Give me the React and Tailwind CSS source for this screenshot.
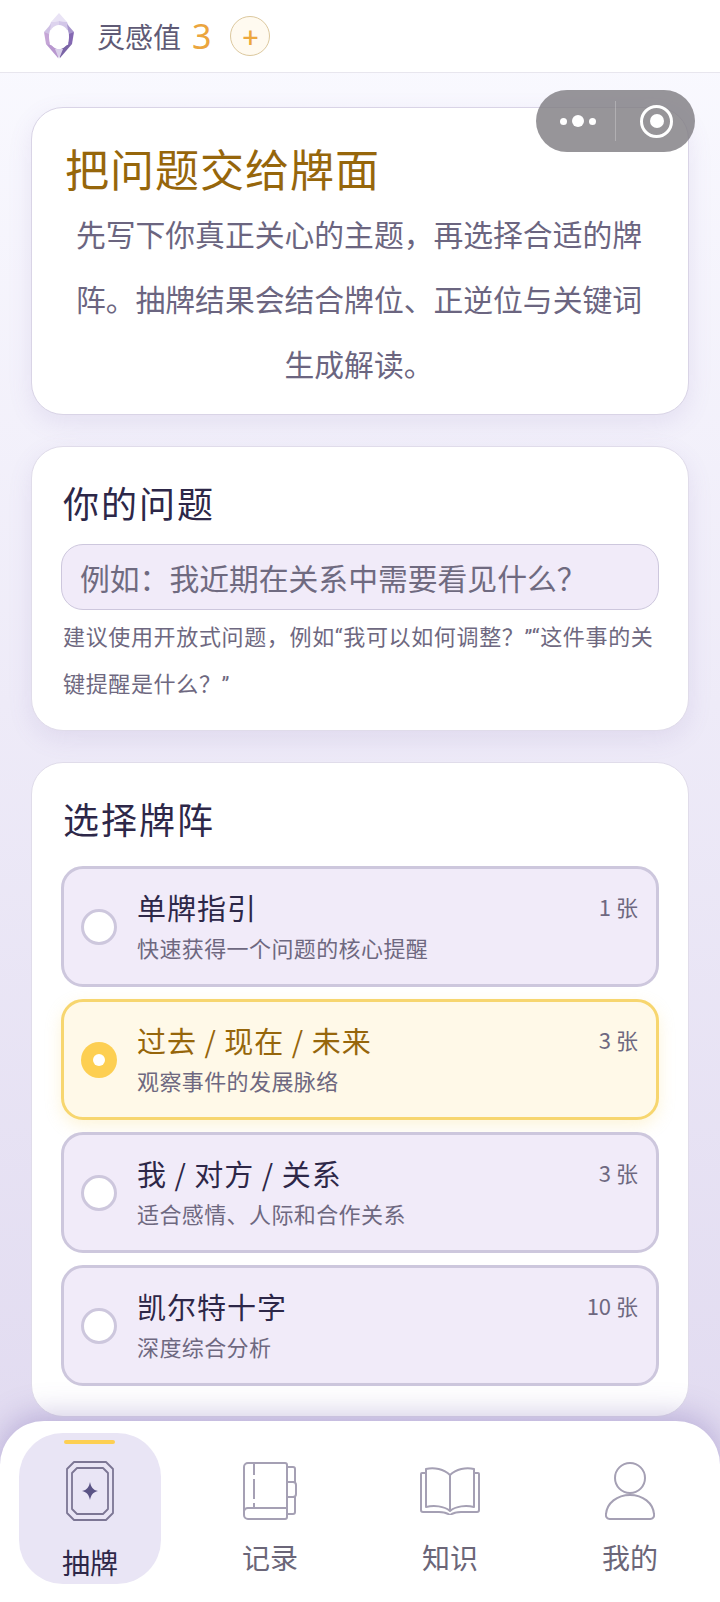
import React from "react";

const FONT = { fontFamily: '"Noto Sans CJK SC", "Noto Sans", sans-serif' };

const spreads = [
  { name: "单牌指引", desc: "快速获得一个问题的核心提醒", count: "1 张" },
  { name: "过去 / 现在 / 未来", desc: "观察事件的发展脉络", count: "3 张", active: true },
  { name: "我 / 对方 / 关系", desc: "适合感情、人际和合作关系", count: "3 张" },
  { name: "凯尔特十字", desc: "深度综合分析", count: "10 张" },
];

const CrystalLogo = () => (
  <svg width="32" height="48" viewBox="0 0 32 48">
    <polygon points="16,1 24,10 16,9 8,10" fill="#e9e3f5" />
    <polygon points="8,10 16,9 16,14 4,20" fill="#ddd3ee" />
    <polygon points="24,10 16,9 16,14 28,20" fill="#d2c6e8" />
    <polygon points="1,20 8,12 6,24" fill="#cfc0e4" />
    <polygon points="31,20 24,12 26,24" fill="#a795cc" />
    <polygon points="1,20 6,22 7,34 3,32" fill="#c5a5d6" />
    <polygon points="31,20 26,22 25,34 29,32" fill="#8468b2" />
    <polygon points="3,32 8,33 16,38 15,46" fill="#b897cf" />
    <polygon points="29,32 24,33 16,38 17,46" fill="#7a64a6" />
    <polygon points="12,37 20,37 16,47" fill="#d9cfe9" />
    <ellipse cx="16" cy="25" rx="10" ry="12" fill="#ffffff" />
  </svg>
);

const CardIcon = () => (
  <svg width="48" height="60" viewBox="0 0 48 60" fill="none" stroke="#7c7694" strokeWidth="1.8">
    <path d="M8 1h32l7 7v44l-7 7H8l-7-7V8z" strokeLinejoin="round" />
    <path d="M11 7h26l5 5v36l-5 5H11l-5-5V12z" strokeLinejoin="round" />
    <path d="M24 21c1 5 3 8 8 9-5 1-7 4-8 9-1-5-3-8-8-9 5-1 7-4 8-9z" fill="#5a5385" stroke="none" />
  </svg>
);

const NotebookIcon = () => (
  <svg width="54" height="58" viewBox="0 0 54 58" fill="none" stroke="#a5a0b4" strokeWidth="2">
    <path d="M5 1h37a2 2 0 0 1 2 2v52a2 2 0 0 1-2 2H5a4 4 0 0 1-4-4V5a4 4 0 0 1 4-4z" />
    <path d="M1 49a4 4 0 0 1 4-3h39" />
    <path d="M11 1v12M11 17v20M11 41v5" />
    <path d="M44 5h6a2 2 0 0 1 2 2v13h-8M44 20h6a3 3 0 0 1 3 3v9a3 3 0 0 1-3 3h-6M44 35h8v15a2 2 0 0 1-2 2h-6" />
  </svg>
);

const BookIcon = () => (
  <svg width="60" height="48" viewBox="0 0 60 48" fill="none" stroke="#a5a0b4" strokeWidth="2" strokeLinejoin="round">
    <path d="M30 8C24 2 14 0 6 2v38c8-2 18-1 24 4 6-5 16-6 24-4V2c-8-2-18 0-24 6z" />
    <path d="M30 8v36" />
    <path d="M6 6H2a1 1 0 0 0-1 1v36a2 2 0 0 0 2 2h16c4 0 8 1 11 3 3-2 7-3 11-3h16a2 2 0 0 0 2-2V7a1 1 0 0 0-1-1h-4" />
  </svg>
);

const PersonIcon = () => (
  <svg width="50" height="58" viewBox="0 0 50 58" fill="none" stroke="#a5a0b4" strokeWidth="2">
    <circle cx="25" cy="16" r="15" />
    <path d="M25 33c-13 0-23 8-24 19a4 4 0 0 0 4 5h40a4 4 0 0 0 4-5c-1-11-11-19-24-19z" />
  </svg>
);

const tabs = [
  { label: "抽牌", icon: <CardIcon />, active: true },
  { label: "记录", icon: <NotebookIcon /> },
  { label: "知识", icon: <BookIcon /> },
  { label: "我的", icon: <PersonIcon /> },
];

const SpreadRow = ({ item }) => (
  <div
    className={`flex h-[121px] items-center rounded-[22px] border-[3px] pl-[17px] pr-[18px] ${
      item.active
        ? "border-[#f7d66f] bg-[#fff9e8] shadow-[0_6px_16px_rgba(247,214,111,0.25)]"
        : "border-[#cdc7dd] bg-[#f1ebf9]"
    }`}
  >
    <div
      className={`flex h-[36px] w-[36px] shrink-0 items-center justify-center rounded-full ${
        item.active ? "bg-[#fdcf52]" : "border-[3px] border-[#cdc7dd] bg-white"
      }`}
    >
      {item.active && <div className="h-[12px] w-[12px] rounded-full bg-white" />}
    </div>
    <div className="ml-[20px] flex-1 pb-[2px]">
      <div className="flex items-start justify-between">
        <div
          className={`text-[29px] leading-[43px] tracking-[1px] ${
            item.active ? "text-[#96660b]" : "text-[#2d2748]"
          }`}
        >
          {item.name}
        </div>
        <div className="pt-[2px] text-[22px] leading-[36px] text-[#6e6880]">{item.count}</div>
      </div>
      <div className="text-[22px] leading-[36px] tracking-[0.4px] text-[#6e6880]">{item.desc}</div>
    </div>
  </div>
);

export default function App() {
  return (
    <div
      className="relative flex h-[1602px] w-[720px] flex-col overflow-hidden bg-gradient-to-b from-[#fafaff] to-[#dfd8ef]"
      style={FONT}
    >
      {/* header */}
      <div className="flex h-[73px] shrink-0 items-center border-b border-[#e8e6ee] bg-white pl-[43px]">
        <CrystalLogo />
        <span className="ml-[22px] text-[28px] text-[#5f5a75]">灵感值</span>
        <span className="ml-[11px] font-['Noto_Sans'] text-[34px] text-[#eba53e]">3</span>
        <div className="ml-[19px] flex h-[40px] w-[40px] items-center justify-center rounded-full border border-[#dcc89e] bg-[#fffaf0] text-[28px] font-medium leading-none text-[#eda73c]">
          +
        </div>
      </div>

      {/* wechat capsule */}
      <div className="absolute left-[536px] top-[90px] z-20 flex h-[62px] w-[159px] items-center rounded-full bg-[#7d7b80]/80">
        <div className="flex w-[79px] items-center justify-center gap-[5px] pl-[5px]">
          <span className="h-[7px] w-[7px] rounded-full bg-white" />
          <span className="h-[12px] w-[12px] rounded-full bg-white" />
          <span className="h-[7px] w-[7px] rounded-full bg-white" />
        </div>
        <div className="h-[40px] w-px bg-white/25" />
        <div className="ml-[24px] flex h-[33px] w-[33px] items-center justify-center rounded-full border-[3px] border-white">
          <span className="h-[14px] w-[14px] rounded-full bg-white" />
        </div>
      </div>

      {/* content */}
      <div className="flex flex-1 flex-col gap-[31px] px-[31px] pt-[34px]">
        <div className="h-[308px] rounded-[32px] border border-[#d9d4e6] bg-white pl-[33px] pr-[35px] pt-[30px] shadow-[0_8px_24px_rgba(120,100,170,0.12)]">
          <h1 className="text-[44px] font-normal leading-[60px] tracking-[1px] text-[#96660b]">把问题交给牌面</h1>
          <p className="mt-[3px] text-center text-[29.8px] leading-[65px] text-[#6b6580]">
            先写下你真正关心的主题，再选择合适的牌阵。抽牌结果会结合牌位、正逆位与关键词生成解读。
          </p>
        </div>

        <div className="h-[285px] rounded-[32px] border border-[#e0dcea] bg-white px-[29px] pt-[28px] shadow-[0_8px_24px_rgba(120,100,170,0.12)]">
          <h2 className="pl-[2px] text-[36px] font-normal leading-[54px] tracking-[2px] text-[#2d2748]">你的问题</h2>
          <div className="mt-[15px] flex h-[66px] items-center rounded-[22px] border border-[#cdc7dd] bg-[#f1ebf9] px-[18px] text-[29.8px] text-[#6f6a80]">
            例如：我近期在关系中需要看见什么？
          </div>
          <p className="mt-[4px] pl-[2px] font-['Roboto','Noto_Sans_CJK_SC',sans-serif] text-[22px] leading-[47px] tracking-[0.65px] text-[#6e6880]">
            建议使用开放式问题，例如“我可以如何调整？”“这件事的关键提醒是什么？”
          </p>
        </div>

        <div className="h-[655px] shrink-0 rounded-[32px] border border-[#e0dcea] bg-white px-[29px] pt-[28px]">
          <h2 className="pl-[2px] text-[36px] font-normal leading-[54px] tracking-[2px] text-[#2d2748]">选择牌阵</h2>
          <div className="mt-[21px] flex flex-col gap-[12px]">
            {spreads.map((item) => (
              <SpreadRow key={item.name} item={item} />
            ))}
          </div>
        </div>
      </div>

      {/* bottom nav */}
      <div className="relative z-10 grid h-[181px] shrink-0 grid-cols-4 rounded-t-[44px] bg-white shadow-[0_-6px_30px_rgba(110,90,170,0.35)]">
        {tabs.map((tab) => (
          <div key={tab.label} className="flex justify-center pt-[12px]">
            <div
              className={`relative flex h-[151px] w-[142px] flex-col items-center rounded-[44px] ${
                tab.active ? "bg-[#e9e5f5]" : ""
              }`}
            >
              {tab.active && <div className="absolute left-[45px] top-[7px] h-[4px] w-[51px] rounded-full bg-[#fdcf52]" />}
              <div className="mt-[28px] flex h-[60px] items-center justify-center">{tab.icon}</div>
              <span
                className={`text-[28px] leading-[40px] ${
                  tab.active ? "mt-[21px] text-[#2d2748]" : "mt-[16px] text-[#6b6678]"
                }`}
              >
                {tab.label}
              </span>
            </div>
          </div>
        ))}
      </div>
    </div>
  );
}
